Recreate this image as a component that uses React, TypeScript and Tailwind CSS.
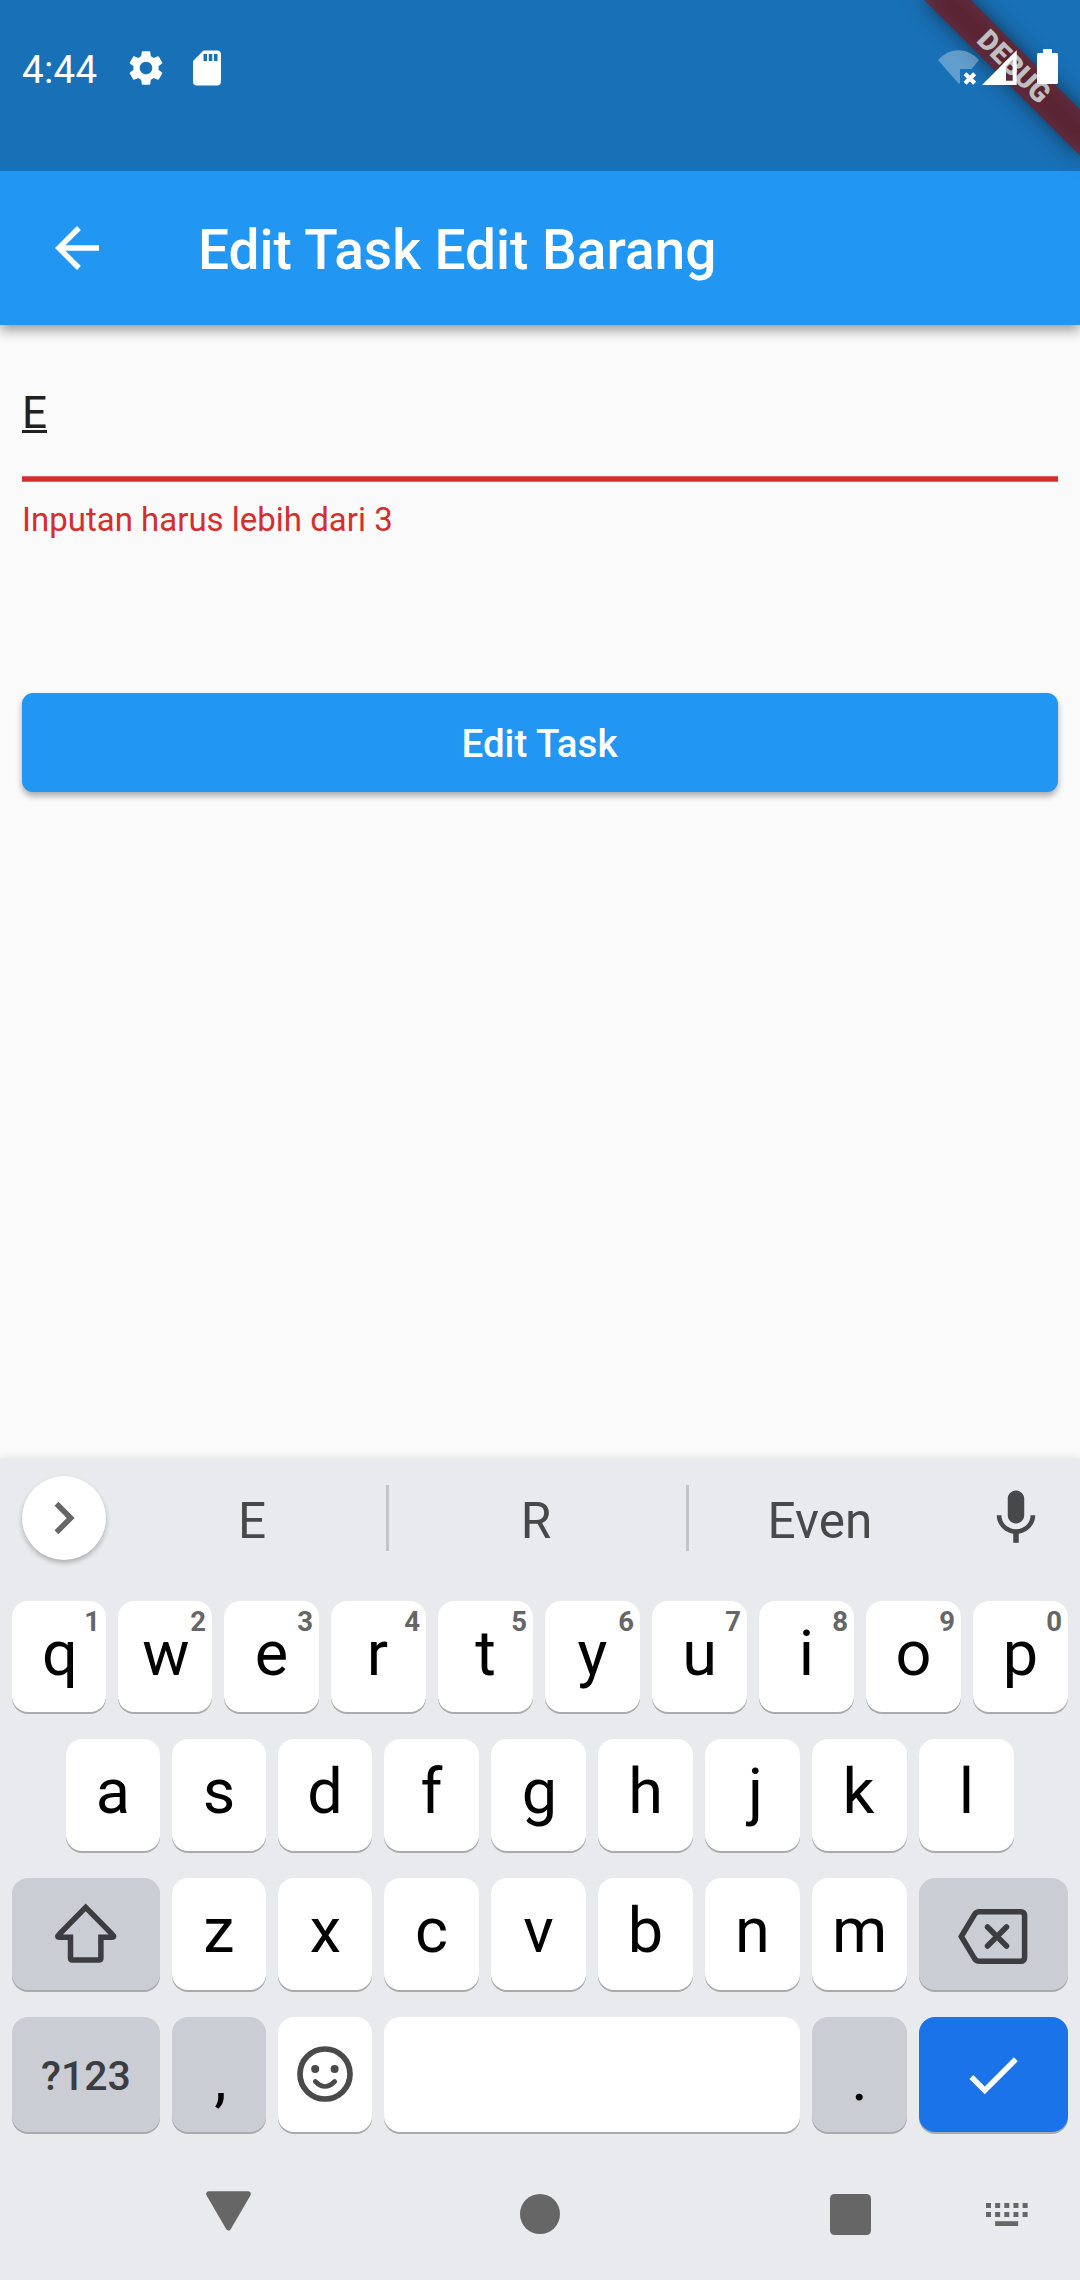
import React from "react";
import { MdArrowBack, MdCheck, MdMic, MdSdStorage, MdSettings } from "react-icons/md";

function DebugBanner() {
  return (
    <div className="absolute top-0 right-0 h-[230px] w-[260px] overflow-hidden">
      <div className="absolute top-[49.5px] left-[84px] h-[33px] w-[220px] rotate-45">
        <div className="absolute inset-0 bg-black/50 blur-[10.5px]" />
        <div className="absolute inset-0 flex items-center justify-center bg-[#b71c1c]/63 text-[28px] leading-[33px] font-black text-white">
          DEBUG
        </div>
      </div>
    </div>
  );
}

function WifiOffIcon() {
  return (
    <svg className="h-[36px] w-[42px]" viewBox="938 49 42 36">
      <path d="M959 84 L938 60 Q947 50.200 958.500 50.200 Q970 50.200 979 60 L971.500 69 H960 V83 Z" fill="#fff" fillOpacity="0.32" />
      <path d="M965 73.700 L974.700 83.300 M974.700 73.700 L965 83.300" stroke="#fff" strokeWidth="4.200" />
    </svg>
  );
}

function SignalIcon() {
  return (
    <svg className="h-[36px] w-[35px]" viewBox="982 49 35 36">
      <path fillRule="evenodd" d="M1016.700 50.300 V85 H982 Z M1012.700 59.500 L1006 66.200 V80.800 H1012.700 Z" fill="#fff" />
    </svg>
  );
}

function StatusBar() {
  return (
    <div className="absolute inset-x-0 top-0 flex h-[171px] items-start bg-black/25 text-white">
      <div className="mt-[50px] ml-[22px] w-[75px] text-[38.5px] leading-[40px] tracking-[0.3px]">4:44</div>
      <MdSettings className="mt-[47px] ml-[28px] h-[42px] w-[42px]" />
      <MdSdStorage className="mt-[47px] ml-[19px] h-[42px] w-[42px]" />
      <div className="mt-[49px] mr-[22px] ml-auto flex">
        <WifiOffIcon />
        <div className="ml-[2px]">
          <SignalIcon />
        </div>
        <div className="ml-[20px] flex w-[21px] flex-col items-center">
          <div className="h-[4px] w-[9px] bg-white" />
          <div className="h-[31px] w-[21px] rounded-[1.5px] bg-white" />
        </div>
      </div>
    </div>
  );
}

function Key({
  width,
  tone = "light",
  hint,
  children,
}: {
  width: string;
  tone?: "light" | "dark" | "blue";
  hint?: string;
  children?: React.ReactNode;
}) {
  const tones = { light: "bg-white", dark: "bg-[#cbcdd5]", blue: "bg-[#1a73e8]" };
  return (
    <div
      className={`relative flex shrink-0 items-center justify-center rounded-[16px] text-[63px] leading-[64px] text-black shadow-[0_2px_0_#a9aaac] ${tones[tone]} ${width}`}
    >
      {children}
      {hint && (
        <span className="absolute top-[5px] right-[6px] text-[27.5px] leading-[32px] font-bold text-[#666]">{hint}</span>
      )}
    </div>
  );
}

const topRow = ["q", "w", "e", "r", "t", "y", "u", "i", "o", "p"];
const homeRow = ["a", "s", "d", "f", "g", "h", "j", "k", "l"];
const lowerRow = ["z", "x", "c", "v", "b", "n", "m"];

const nudge: Record<string, string> = {
  q: "pl-[2px]",
  w: "pl-[2px]",
  r: "pr-[2px]",
  g: "pl-[2px]",
  j: "pl-[6px]",
  k: "pr-[2px]",
  x: "pl-[1px]",
};

function Suggestions() {
  return (
    <div className="flex h-[143px] items-start text-[49.5px] leading-[60px] text-[#47484a]">
      <div className="mt-[18px] ml-[22px] flex h-[84px] w-[84px] items-center justify-center rounded-full bg-white shadow-[0_3px_5px_rgba(0,0,0,0.25)]">
        <svg className="h-[34px] w-[22px]" viewBox="0 0 22 34" fill="none" stroke="#666" strokeWidth="5.500">
          <path d="M3.500 2.800 L17.700 17 L3.500 31.200" />
        </svg>
      </div>
      <div className="mt-[33px] ml-[12px] w-[268px] text-center">E</div>
      <div className="mt-[27px] h-[66px] w-[3px] bg-[#c3c4c8]" />
      <div className="mt-[33px] w-[297px] pr-[3px] text-center">R</div>
      <div className="mt-[27px] h-[66px] w-[3px] bg-[#c3c4c8]" />
      <div className="mt-[33px] w-[264px] pr-[2px] text-center">Even</div>
      <MdMic className="mt-[27px] ml-[30px] h-[66px] w-[66px]" />
    </div>
  );
}

function Keyboard() {
  return (
    <div className="relative h-[822px] bg-[#e8eaed] shadow-[0_0_8px_rgba(0,0,0,0.1)]">
      <Suggestions />
      <div className="flex h-[111px] gap-[12px] pl-[12px]">
        {topRow.map((k, i) => (
          <Key key={k} width={i < 2 ? "w-[94px]" : "w-[95px]"} hint={String((i + 1) % 10)}>
            <span className={`mb-[6px] ${nudge[k] ?? ""}`}>{k}</span>
          </Key>
        ))}
      </div>
      <div className="mt-[27px] flex h-[112px] gap-[12px] pl-[66px]">
        {homeRow.map((k, i) => (
          <Key key={k} width={i < 3 ? "w-[94px]" : "w-[95px]"}>
            <span className={`mb-[7px] ${nudge[k] ?? ""}`}>{k}</span>
          </Key>
        ))}
      </div>
      <div className="mt-[27px] flex h-[112px] gap-[12px] pl-[12px]">
        <Key width="w-[148px]" tone="dark">
          <svg className="h-[112px] w-[148px]" viewBox="12 1878 148 112" fill="none" stroke="#3c3d40" strokeWidth="5.500">
            <path
              strokeLinejoin="miter"
              d="M59.500 1934 L85.700 1907.400 L111.900 1934 Q115.500 1937.300 111.500 1937.300 H100.900 V1958 Q100.900 1960 98.900 1960 H72.500 Q70.500 1960 70.500 1958 V1937.300 H59.900 Q55.900 1937.300 59.500 1934 Z"
            />
          </svg>
        </Key>
        {lowerRow.map((k, i) => (
          <Key key={k} width={i < 2 ? "w-[94px]" : "w-[95px]"}>
            <span className={`mb-[7px] ${nudge[k] ?? ""}`}>{k}</span>
          </Key>
        ))}
        <Key width="w-[149px]" tone="dark">
          <svg className="h-[112px] w-[149px]" viewBox="919 1878 149 112" fill="none" stroke="#3c3d40" strokeWidth="5.500">
            <path d="M961.300 1936.500 L974.700 1914.200 Q976.300 1911.700 979.300 1911.700 H1020.500 Q1024.600 1911.700 1024.600 1915.800 V1957.200 Q1024.600 1961.300 1020.500 1961.300 H979.300 Q976.300 1961.300 974.700 1958.800 Z" />
            <path strokeLinecap="round" d="M987.500 1927 L1006.500 1946 M1006.500 1927 L987.500 1946" />
          </svg>
        </Key>
      </div>
      <div className="mt-[27px] flex h-[115px] gap-[12px] pl-[12px]">
        <Key width="w-[148px]" tone="dark">
          <span className="mt-[3px] text-[41px] font-medium text-[#3c3d40]">?123</span>
        </Key>
        <Key width="w-[94px]" tone="dark">
          <span className="mt-[8px] pl-[3px]">,</span>
        </Key>
        <Key width="w-[94px]">
          <svg className="h-[115px] w-[94px]" viewBox="278 2017 94 115" fill="none" stroke="#4a4a4a">
            <circle cx="325" cy="2074" r="25" strokeWidth="5.700" />
            <circle cx="315.200" cy="2069" r="4" fill="#4a4a4a" stroke="none" />
            <circle cx="334.600" cy="2069" r="4" fill="#4a4a4a" stroke="none" />
            <path d="M315.300 2081.500 Q325 2091.500 334.700 2081.500" strokeWidth="4.700" strokeLinecap="round" />
          </svg>
        </Key>
        <Key width="w-[416px]" />
        <Key width="w-[95px]" tone="dark">
          <span className="mt-[8px]">.</span>
        </Key>
        <Key width="w-[149px]" tone="blue">
          <MdCheck className="mr-[1px] h-[66px] w-[66px] text-white" />
        </Key>
      </div>
      <NavBar />
    </div>
  );
}

function NavBar() {
  return (
    <div className="flex items-start pt-[59px] text-[#666]">
      <svg className="ml-[206px] h-[40px] w-[45px]" viewBox="0 0 45 40">
        <path
          d="M3 3 H42 L22.500 36.500 Z"
          fill="currentColor"
          stroke="currentColor"
          strokeWidth="5.500"
          strokeLinejoin="round"
        />
      </svg>
      <div className="mt-[3px] ml-[269px] h-[40px] w-[40px] rounded-full bg-[#666]" />
      <div className="mt-[3px] ml-[270px] h-[41px] w-[41px] rounded-[4.5px] bg-[#666]" />
      <svg className="mt-[12px] ml-[115px] h-[23px] w-[42px]" viewBox="0 0 42 23" fill="currentColor">
        {[0, 9.15, 18.3, 27.45, 36.6].map((x) => (
          <g key={x}>
            <rect x={x} y="0" width="5" height="5" />
            <rect x={x} y="9" width="5" height="5" />
          </g>
        ))}
        <rect x="9.150" y="18.200" width="23" height="4.800" />
      </svg>
    </div>
  );
}

export default function App() {
  return (
    <div className="relative flex h-[2280px] w-[1080px] flex-col overflow-hidden bg-[#fafafa] font-[Roboto,sans-serif]">
      <header className="flex h-[325px] items-start bg-[#2196f3] pt-[171px] text-white shadow-[0_5px_12px_rgba(0,0,0,0.4)]">
        <MdArrowBack className="mt-[44px] ml-[44px] h-[66px] w-[66px]" />
        <h1 className="mt-[47px] ml-[88px] text-[55px] leading-[64px] font-medium whitespace-nowrap">
          Edit Task Edit Barang
        </h1>
      </header>
      <DebugBanner />
      <StatusBar />
      <main className="flex-1 px-[22px]">
        <div className="h-[151px] pt-[63px]">
          <div className="relative w-[25px] text-[44px] leading-[50px] text-[#212121]">
            E
            <div className="absolute top-[42px] left-0 h-[2.75px] w-[25px] bg-[#212121]" />
          </div>
        </div>
        <div className="h-[6px] border-y border-[#e0646a] bg-[#d32f2f]" />
        <div className="mt-[18px] text-[33px] leading-[40px] text-[#d32f2f]">Inputan harus lebih dari 3</div>
        <button className="mt-[153px] flex h-[99px] w-full items-center justify-center rounded-[11px] bg-[#2196f3] pt-[2px] pr-[1px] text-[38.5px] font-medium text-white shadow-[0_4px_6px_rgba(0,0,0,0.32)]">
          Edit Task
        </button>
      </main>
      <Keyboard />
    </div>
  );
}
